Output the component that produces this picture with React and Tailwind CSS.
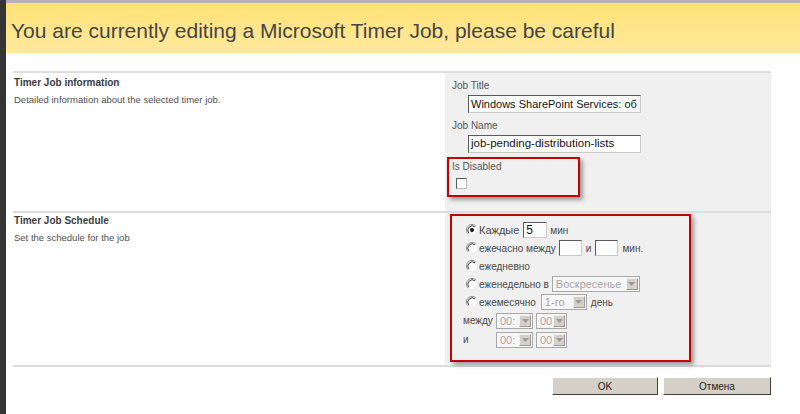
import React from "react";

// Classic Win2000-style radio button
function Radio({ checked }) {
  return (
    <svg width="12" height="12" viewBox="0 0 12 12" className="shrink-0">
      <circle cx="6" cy="6" r="5.5" fill="#fff" />
      <path d="M2.1 9.9A5.5 5.5 0 0 1 9.9 2.1" stroke="#8a8a8a" fill="none" />
      <path d="M2.9 9.1A4.4 4.4 0 0 1 9.1 2.9" stroke="#404040" fill="none" />
      <path d="M9.9 2.1A5.5 5.5 0 0 1 2.1 9.9" stroke="#e8e8e8" fill="none" />
      {checked && <circle cx="6" cy="6" r="2" fill="#111" />}
    </svg>
  );
}

function TextBox({ value, className }) {
  return (
    <span
      className={`flex items-center overflow-hidden whitespace-nowrap border border-t-[#5a5a5a] border-l-[#5a5a5a] border-r-[#c9c9c9] border-b-[#c9c9c9] bg-white pl-[2px] text-[#111] ${className}`}
    >
      {value}
    </span>
  );
}

function Dropdown({ value, className }) {
  return (
    <span
      className={`flex h-[16px] items-stretch border border-[#a8a8a8] bg-[#f6f6f6] ${className}`}
    >
      <span className="flex-1 overflow-hidden whitespace-nowrap pl-[3px] text-[11px] leading-[14px] text-[#a6a6a6]">
        {value}
      </span>
      <span className="m-[1px] flex w-[12px] items-center justify-center border border-t-[#f0f0f0] border-l-[#f0f0f0] border-r-[#9a9a9a] border-b-[#9a9a9a] bg-[#d4d0c8]">
        <svg width="7" height="4" viewBox="0 0 7 4">
          <path d="M0 0h7L3.5 4z" fill="#9a9a9a" />
        </svg>
      </span>
    </span>
  );
}

function SectionInfo({ title, text, top }) {
  return (
    <div className={`w-[432px] shrink-0 pl-[1px] ${top}`}>
      <div className="text-[10px] font-bold leading-[12px] text-[#3b3b3b]">{title}</div>
      <div className="mt-[5px] text-[9.5px] leading-[12px] text-[#4f4f4f]">{text}</div>
    </div>
  );
}

export default function App() {
  return (
    <div className="flex h-[414px] w-[800px] overflow-hidden bg-white font-['Liberation_Sans',Arial,sans-serif]">
      {/* dark window edge */}
      <div className="w-[6px] shrink-0 bg-[#353535]" />

      <div className="flex flex-1 flex-col">
        <div className="h-[3px] bg-[#b3b3b3]" />

        {/* warning banner */}
        <div className="flex h-[50px] items-center bg-gradient-to-b from-[#ffe173] to-[#ffe99f] pl-[5px] pt-[6px] text-[21px] text-[#454545]">
          You are currently editing a Microsoft Timer Job, please be careful
        </div>

        <div className="mt-[18px] mr-[29px] ml-[7px] border-t-2 border-[#dcdcdc]">
          {/* Timer Job information */}
          <div className="flex h-[138px]">
            <SectionInfo
              title="Timer Job information"
              text="Detailed information about the selected timer job."
              top="pt-[4px]"
            />
            <div className="flex-1 bg-[#f0f0f1] pl-[2px] pt-[7px] text-[10px] text-[#555]">
              <div className="ml-[5px] leading-[12px]">Job Title</div>
              <TextBox
                value="Windows SharePoint Services: об"
                className="mt-[3px] ml-[21px] h-[18px] w-[173px] text-[11px]"
              />
              <div className="mt-[7px] ml-[5px] leading-[12px]">Job Name</div>
              <TextBox
                value="job-pending-distribution-lists"
                className="mt-[3px] ml-[21px] h-[18px] w-[173px] text-[11.5px]"
              />
              <div className="mt-[4px] h-[40px] w-[133px] border-2 border-[#c40000] pl-[3px] pt-[2px] shadow-[3px_3px_4px_rgba(0,0,0,0.35)]">
                <div className="leading-[12px]">Is Disabled</div>
                <span className="mt-[5px] ml-[4px] block h-[11px] w-[11px] border border-t-[#5a5a5a] border-l-[#5a5a5a] border-r-[#bdbdbd] border-b-[#bdbdbd] bg-white" />
              </div>
            </div>
          </div>

          {/* Timer Job Schedule */}
          <div className="flex h-[154px] border-t-2 border-[#dcdcdc]">
            <SectionInfo
              title="Timer Job Schedule"
              text="Set the schedule for the job"
              top="pt-[2px]"
            />
            <div className="flex-1 bg-[#f0f0f1] pl-[5px] pt-[1px] text-[10px] text-[#4a4a4a]">
              <div className="h-[148px] w-[241px] border-2 border-[#c40000] pl-[14px] pt-[5px] shadow-[3px_3px_4px_rgba(0,0,0,0.35)]">
                <div className="flex h-[18px] items-center">
                  <Radio checked />
                  <span className="ml-[1px] text-[11px]">Каждые</span>
                  <TextBox value="5" className="ml-[4px] h-[16px] w-[24px] text-[12px]" />
                  <span className="ml-[3px]">мин</span>
                </div>
                <div className="flex h-[18px] items-center">
                  <Radio />
                  <span className="ml-[1px]">ежечасно между</span>
                  <TextBox value="" className="ml-[3px] h-[16px] w-[23px]" />
                  <span className="ml-[4px]">и</span>
                  <TextBox value="" className="ml-[4px] h-[16px] w-[23px]" />
                  <span className="ml-[4px]">мин.</span>
                </div>
                <div className="flex h-[18px] items-center">
                  <Radio />
                  <span className="ml-[1px]">ежедневно</span>
                </div>
                <div className="flex h-[18px] items-center">
                  <Radio />
                  <span className="ml-[1px]">еженедельно в</span>
                  <Dropdown value="Воскресенье" className="ml-[3px] w-[88px]" />
                </div>
                <div className="flex h-[18px] items-center">
                  <Radio />
                  <span className="ml-[1px]">ежемесячно</span>
                  <Dropdown value="1-го" className="ml-[5px] w-[46px]" />
                  <span className="ml-[4px]">день</span>
                </div>
                <div className="-ml-[3px] flex h-[19px] items-center">
                  <span className="w-[33px]">между</span>
                  <Dropdown value="00:" className="w-[37px]" />
                  <Dropdown value="00" className="ml-[3px] w-[31px]" />
                </div>
                <div className="-ml-[3px] flex h-[19px] items-center">
                  <span className="w-[33px]">и</span>
                  <Dropdown value="00:" className="w-[37px]" />
                  <Dropdown value="00" className="ml-[3px] w-[31px]" />
                </div>
              </div>
            </div>
          </div>

          {/* form buttons */}
          <div className="flex justify-end gap-[5px] border-t-2 border-[#dcdcdc] pt-[10px]">
            <button className="h-[18px] w-[106px] border border-t-white border-l-white border-r-[#404040] border-b-[#404040] bg-[#d4d0c8] text-[10px] text-[#222]">
              OK
            </button>
            <button className="h-[18px] w-[108px] border border-t-white border-l-white border-r-[#404040] border-b-[#404040] bg-[#d4d0c8] text-[10px] text-[#222]">
              Отмена
            </button>
          </div>
        </div>
      </div>
    </div>
  );
}
